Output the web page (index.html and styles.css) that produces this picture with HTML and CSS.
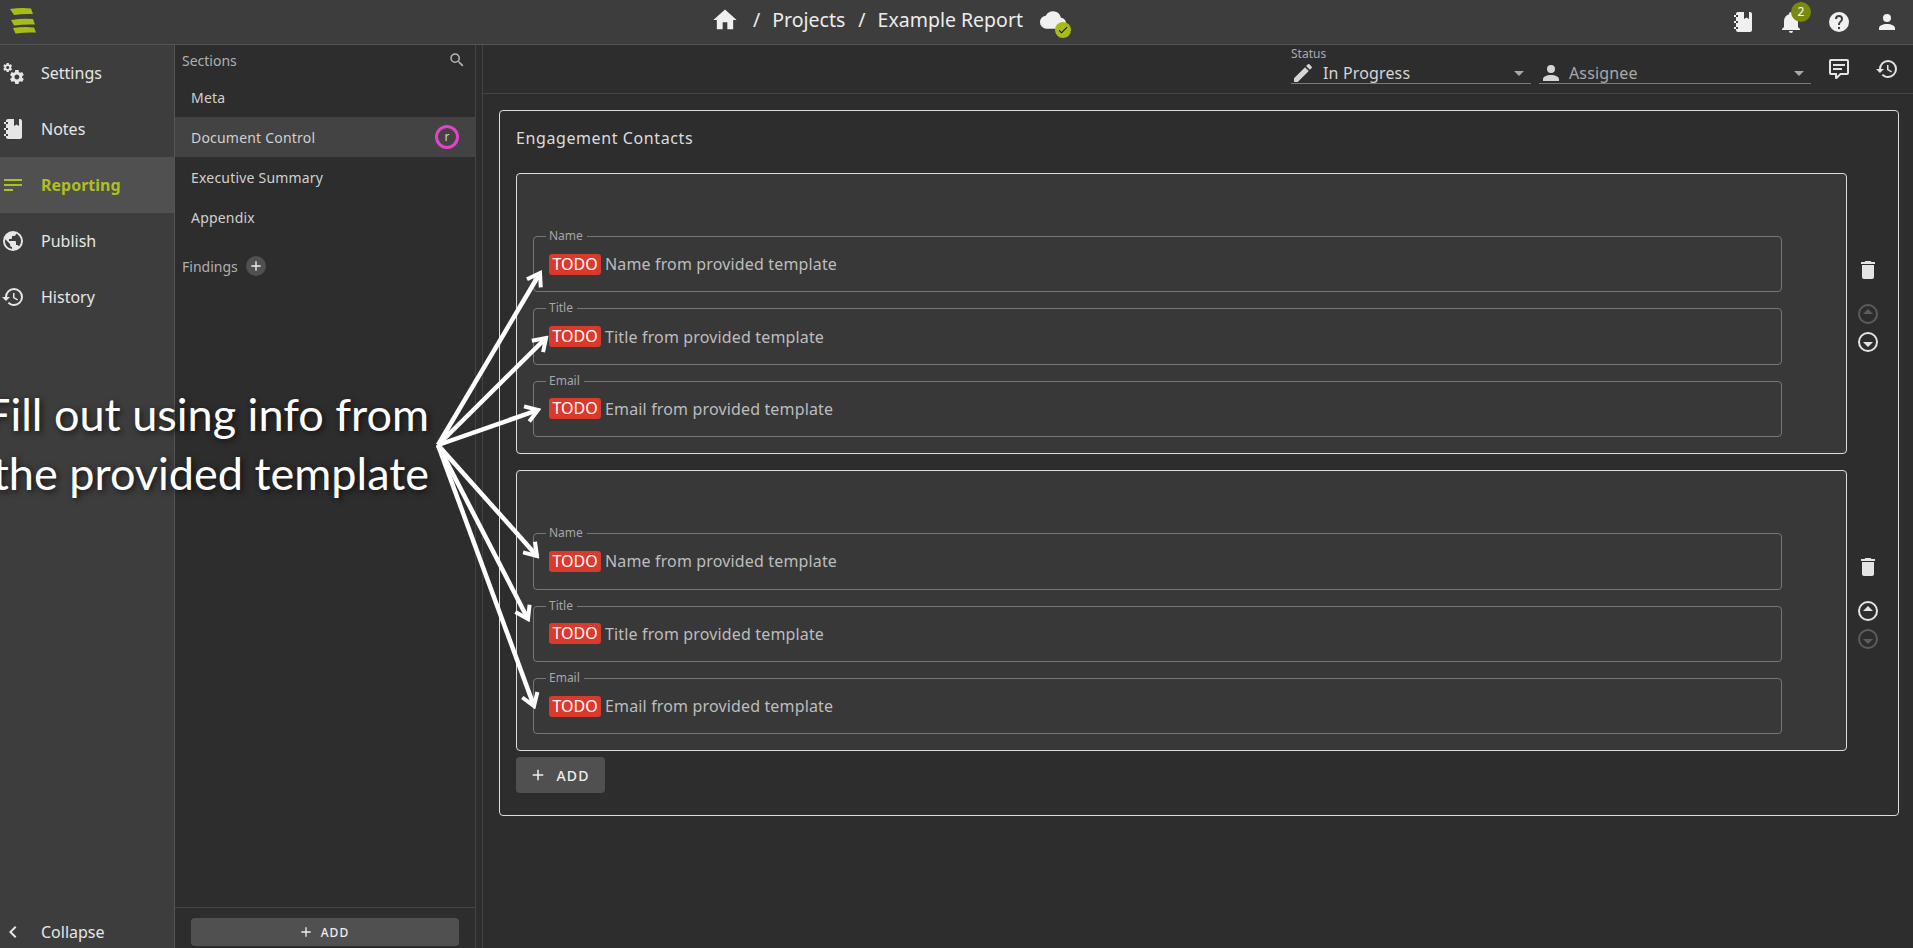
FILE: index.html
```html
<!DOCTYPE html>
<html lang="en">
<head>
<meta charset="utf-8">
<title>Example Report</title>
<link rel="stylesheet" href="styles.css">
</head>
<body>
<svg class="sprite" aria-hidden="true">
  <symbol id="i-home" viewBox="0 0 24 24"><path d="M10 20v-6h4v6h5v-8h3L12 3 2 12h3v8z"/></symbol>
  <symbol id="i-notebook" viewBox="0 0 24 24"><path d="M3 7V5H5V4C5 2.89 5.9 2 7 2H13V9L15.5 7.5L18 9V2H19C20.05 2 21 2.95 21 4V20C21 21.05 20.05 22 19 22H7C5.95 22 5 21.05 5 20V19H3V17H5V13H3V11H5V7H3M7 11H5V13H7V11M7 7V5H5V7H7M7 19V17H5V19H7Z"/></symbol>
  <symbol id="i-cogs" viewBox="0 0 24 24"><path d="M15.9,18.45C17.25,18.45 18.35,17.35 18.35,16C18.35,14.65 17.25,13.55 15.9,13.55C14.54,13.55 13.45,14.65 13.45,16C13.45,17.35 14.54,18.45 15.9,18.45M21.1,16.68L22.58,17.84C22.71,17.95 22.75,18.13 22.66,18.29L21.26,20.71C21.17,20.86 21,20.92 20.83,20.86L19.09,20.16C18.73,20.44 18.34,20.67 17.91,20.85L17.64,22.7C17.62,22.87 17.47,23 17.3,23H14.5C14.32,23 14.18,22.87 14.15,22.7L13.89,20.85C13.46,20.67 13.07,20.44 12.71,20.16L10.96,20.86C10.81,20.92 10.62,20.86 10.54,20.71L9.14,18.29C9.05,18.13 9.09,17.95 9.22,17.84L10.7,16.68L10.65,16L10.7,15.31L9.22,14.16C9.09,14.05 9.05,13.86 9.14,13.71L10.54,11.29C10.62,11.13 10.81,11.07 10.96,11.13L12.71,11.84C13.07,11.56 13.46,11.32 13.89,11.15L14.15,9.29C14.18,9.13 14.32,9 14.5,9H17.3C17.47,9 17.62,9.13 17.64,9.29L17.91,11.15C18.34,11.32 18.73,11.56 19.09,11.84L20.83,11.13C21,11.07 21.17,11.13 21.26,11.29L22.66,13.71C22.75,13.86 22.71,14.05 22.58,14.16L21.1,15.31L21.15,16L21.1,16.68M6.69,8.07C7.56,8.07 8.26,7.37 8.26,6.5C8.26,5.63 7.56,4.92 6.69,4.92A1.58,1.58 0 0,0 5.11,6.5C5.11,7.37 5.82,8.07 6.69,8.07M10.03,6.94L11,7.68C11.07,7.75 11.09,7.87 11.03,7.97L10.13,9.53C10.08,9.63 9.96,9.67 9.86,9.63L8.74,9.18L8,9.62L7.81,10.81C7.79,10.92 7.7,11 7.59,11H5.79C5.67,11 5.58,10.92 5.56,10.81L5.4,9.62L4.64,9.18L3.5,9.63C3.41,9.67 3.3,9.63 3.24,9.53L2.34,7.97C2.28,7.87 2.31,7.75 2.39,7.68L3.34,6.94L3.31,6.5L3.34,6.06L2.39,5.32C2.31,5.25 2.28,5.13 2.34,5.03L3.24,3.47C3.3,3.37 3.41,3.33 3.5,3.37L4.64,3.82L5.4,3.38L5.56,2.19C5.58,2.08 5.67,2 5.79,2H7.59C7.7,2 7.79,2.08 7.81,2.19L8,3.38L8.74,3.82L9.86,3.37C9.96,3.33 10.08,3.37 10.13,3.47L11.03,5.03C11.09,5.13 11.07,5.25 11,5.32L10.03,6.06L10.06,6.5L10.03,6.94Z"/></symbol>
  <symbol id="i-text" viewBox="0 0 24 24"><path d="M21,6V8H3V6H21M3,18H12V16H3V18M3,13H21V11H3V13Z"/></symbol>
  <symbol id="i-earth" viewBox="0 0 24 24"><path d="M17.9,17.39C17.64,16.59 16.89,16 16,16H15V13A1,1 0 0,0 14,12H8V10H10A1,1 0 0,0 11,9V7H13A2,2 0 0,0 15,5V4.59C17.93,5.77 20,8.64 20,12C20,14.08 19.2,15.97 17.9,17.39M11,19.93C7.05,19.44 4,16.08 4,12C4,11.38 4.08,10.78 4.21,10.21L9,15V16A2,2 0 0,0 11,18M12,2A10,10 0 0,0 2,12A10,10 0 0,0 12,22A10,10 0 0,0 22,12A10,10 0 0,0 12,2Z"/></symbol>
  <symbol id="i-history" viewBox="0 0 24 24"><path d="M13.5,8H12V13L16.28,15.54L17,14.33L13.5,12.25V8M13,3A9,9 0 0,0 4,12H1L4.96,16.03L9,12H6A7,7 0 0,1 13,5A7,7 0 0,1 20,12A7,7 0 0,1 13,19C11.07,19 9.32,18.21 8.06,16.94L6.64,18.36C8.27,20 10.5,21 13,21A9,9 0 0,0 22,12A9,9 0 0,0 13,3"/></symbol>
  <symbol id="i-search" viewBox="0 0 24 24"><path d="M9.5,3A6.5,6.5 0 0,1 16,9.5C16,11.11 15.41,12.59 14.44,13.73L14.71,14H15.5L20.5,19L19,20.5L14,15.5V14.71L13.73,14.44C12.59,15.41 11.11,16 9.5,16A6.5,6.5 0 0,1 3,9.5A6.5,6.5 0 0,1 9.5,3M9.5,5C7,5 5,7 5,9.5C5,12 7,14 9.5,14C12,14 14,12 14,9.5C14,7 12,5 9.5,5Z"/></symbol>
  <symbol id="i-plus" viewBox="0 0 24 24"><path d="M19,13H13V19H11V13H5V11H11V5H13V11H19V13Z"/></symbol>
  <symbol id="i-cloud" viewBox="0 0 24 24"><path d="M19.35,10.03C18.67,6.59 15.64,4 12,4C9.11,4 6.6,5.64 5.35,8.03C2.34,8.36 0,10.9 0,14A6,6 0 0,0 6,20H19A5,5 0 0,0 24,15C24,12.36 21.95,10.22 19.35,10.03Z"/></symbol>
  <symbol id="i-check" viewBox="0 0 24 24"><path d="M21,7L9,19L3.5,13.5L4.91,12.09L9,16.17L19.59,5.59L21,7Z"/></symbol>
  <symbol id="i-bell" viewBox="0 0 24 24"><path d="M21,19V20H3V19L5,17V11C5,7.9 7.03,5.17 10,4.29C10,4.19 10,4.1 10,4A2,2 0 0,1 12,2A2,2 0 0,1 14,4C14,4.1 14,4.19 14,4.29C16.97,5.17 19,7.9 19,11V17L21,19M14,21A2,2 0 0,1 12,23A2,2 0 0,1 10,21"/></symbol>
  <symbol id="i-help" viewBox="0 0 24 24"><path d="M15.07,11.25L14.17,12.17C13.45,12.89 13,13.5 13,15H11V14.5C11,13.39 11.45,12.39 12.17,11.67L13.41,10.41C13.78,10.05 14,9.55 14,9C14,7.89 13.1,7 12,7A2,2 0 0,0 10,9H8A4,4 0 0,1 12,5A4,4 0 0,1 16,9C16,9.88 15.64,10.67 15.07,11.25M13,19H11V17H13M12,2A10,10 0 0,0 2,12A10,10 0 0,0 12,22A10,10 0 0,0 22,12C22,6.47 17.5,2 12,2Z"/></symbol>
  <symbol id="i-account" viewBox="0 0 24 24"><path d="M12,4A4,4 0 0,1 16,8A4,4 0 0,1 12,12A4,4 0 0,1 8,8A4,4 0 0,1 12,4M12,14C16.42,14 20,15.79 20,18V20H4V18C4,15.79 7.58,14 12,14Z"/></symbol>
  <symbol id="i-pencil" viewBox="0 0 24 24"><path d="M20.71,7.04C21.1,6.65 21.1,6 20.71,5.63L18.37,3.29C18,2.9 17.35,2.9 16.96,3.29L15.12,5.12L18.87,8.87M3,17.25V21H6.75L17.81,9.93L14.06,6.18L3,17.25Z"/></symbol>
  <symbol id="i-down" viewBox="0 0 24 24"><path d="M7,10L12,15L17,10H7Z"/></symbol>
  <symbol id="i-comment" viewBox="0 0 24 24"><path d="M9,22A1,1 0 0,1 8,21V18H4A2,2 0 0,1 2,16V4C2,2.89 2.9,2 4,2H20A2,2 0 0,1 22,4V16A2,2 0 0,1 20,18H13.9L10.2,21.71C10,21.9 9.75,22 9.5,22V22H9M10,16V19.08L13.08,16H20V4H4V16H10M6,7H18V9H6V7M6,11H15V13H6V11Z"/></symbol>
  <symbol id="i-delete" viewBox="0 0 24 24"><path d="M19,4H15.5L14.5,3H9.5L8.5,4H5V6H19M6,19A2,2 0 0,0 8,21H16A2,2 0 0,0 18,19V7H6V19Z"/></symbol>
  <symbol id="i-up-circle" viewBox="0 0 24 24"><path d="M12,7L17,12H7M12,22A10,10 0 0,1 2,12A10,10 0 0,1 12,2A10,10 0 0,1 22,12A10,10 0 0,1 12,22M12,4A8,8 0 0,0 4,12A8,8 0 0,0 12,20A8,8 0 0,0 20,12A8,8 0 0,0 12,4Z"/></symbol>
  <symbol id="i-down-circle" viewBox="0 0 24 24"><path d="M12,17L7,12H17M12,2A10,10 0 0,1 22,12A10,10 0 0,1 12,22A10,10 0 0,1 2,12A10,10 0 0,1 12,2M12,4A8,8 0 0,0 4,12A8,8 0 0,0 12,20A8,8 0 0,0 20,12A8,8 0 0,0 12,4Z"/></symbol>
  <symbol id="i-left" viewBox="0 0 24 24"><path d="M15.41,16.58L10.83,12L15.41,7.41L14,6L8,12L14,18L15.41,16.58Z"/></symbol>
</svg>

<header class="topbar">
  <svg class="logo" viewBox="0 0 44 44" aria-hidden="true">
    <path d="M10 9Q21 7.500 31 8.500L33 14Q23 13.500 14 15Z"/>
    <path d="M11 20Q23 18 33 19L35 24.500Q25 24 14 25.500Z"/>
    <path d="M13 28Q24 26.500 34 27.500L36 32.500Q26 32 15.500 33.500Z"/>
  </svg>
  <nav class="crumbs">
    <svg class="icon crumb-home"><use href="#i-home"/></svg>
    <span class="crumb-sep">/</span>
    <span>Projects</span>
    <span class="crumb-sep">/</span>
    <span>Example Report</span>
    <span class="sync">
      <svg class="icon sync-cloud"><use href="#i-cloud"/></svg>
      <span class="sync-ok"><svg class="sync-check"><use href="#i-check"/></svg></span>
    </span>
  </nav>
  <div class="top-actions">
    <span class="top-btn"><svg class="icon"><use href="#i-notebook"/></svg></span>
    <span class="top-btn"><svg class="icon"><use href="#i-bell"/></svg><span class="bell-badge">2</span></span>
    <span class="top-btn"><svg class="icon"><use href="#i-help"/></svg></span>
    <span class="top-btn"><svg class="icon"><use href="#i-account"/></svg></span>
  </div>
</header>

<div class="shell">
  <aside class="sidebar">
    <a class="nav-item"><svg class="icon"><use href="#i-cogs"/></svg><span>Settings</span></a>
    <a class="nav-item"><svg class="icon"><use href="#i-notebook"/></svg><span>Notes</span></a>
    <a class="nav-item is-active"><svg class="icon"><use href="#i-text"/></svg><span>Reporting</span></a>
    <a class="nav-item"><svg class="icon"><use href="#i-earth"/></svg><span>Publish</span></a>
    <a class="nav-item"><svg class="icon"><use href="#i-history"/></svg><span>History</span></a>
    <a class="collapse"><svg class="icon"><use href="#i-left"/></svg><span>Collapse</span></a>
  </aside>

  <section class="sections">
    <div class="sections-scroll">
      <div class="panel-head">
        <span>Sections</span>
        <svg class="search-icon"><use href="#i-search"/></svg>
      </div>
      <div class="sec-item">Meta</div>
      <div class="sec-item is-selected">Document Control<span class="avatar">r</span></div>
      <div class="sec-item">Executive Summary</div>
      <div class="sec-item">Appendix</div>
      <div class="findings-head">
        <span>Findings</span>
        <span class="round-plus"><svg><use href="#i-plus"/></svg></span>
      </div>
    </div>
    <div class="sections-foot">
      <button class="btn btn-wide"><svg><use href="#i-plus"/></svg>Add</button>
    </div>
  </section>

  <div class="gutter"></div>

  <main class="main">
    <div class="statusbar">
      <div class="select select-status">
        <span class="select-label">Status</span>
        <svg class="icon"><use href="#i-pencil"/></svg>
        <span class="select-value">In Progress</span>
        <svg class="icon select-caret"><use href="#i-down"/></svg>
      </div>
      <div class="select select-assignee">
        <svg class="icon"><use href="#i-account"/></svg>
        <span class="select-value is-placeholder">Assignee</span>
        <svg class="icon select-caret"><use href="#i-down"/></svg>
      </div>
      <span class="bar-btn"><svg class="icon"><use href="#i-comment"/></svg></span>
      <span class="bar-btn"><svg class="icon"><use href="#i-history"/></svg></span>
    </div>

    <div class="content">
      <div class="outer-card">
        <h2 class="outer-title">Engagement Contacts</h2>

        <div class="contact-row">
          <div class="contact-card">
            <div class="field"><span class="legend">Name</span><span class="chip">TODO</span><span>Name from provided template</span></div>
            <div class="field"><span class="legend">Title</span><span class="chip">TODO</span><span>Title from provided template</span></div>
            <div class="field"><span class="legend">Email</span><span class="chip">TODO</span><span>Email from provided template</span></div>
          </div>
          <div class="row-actions">
            <span class="trash"><svg class="icon"><use href="#i-delete"/></svg></span>
            <span class="move is-disabled"><svg class="icon"><use href="#i-up-circle"/></svg></span>
            <span class="move"><svg class="icon"><use href="#i-down-circle"/></svg></span>
          </div>
        </div>

        <div class="contact-row">
          <div class="contact-card">
            <div class="field"><span class="legend">Name</span><span class="chip">TODO</span><span>Name from provided template</span></div>
            <div class="field"><span class="legend">Title</span><span class="chip">TODO</span><span>Title from provided template</span></div>
            <div class="field"><span class="legend">Email</span><span class="chip">TODO</span><span>Email from provided template</span></div>
          </div>
          <div class="row-actions">
            <span class="trash"><svg class="icon"><use href="#i-delete"/></svg></span>
            <span class="move"><svg class="icon"><use href="#i-up-circle"/></svg></span>
            <span class="move is-disabled"><svg class="icon"><use href="#i-down-circle"/></svg></span>
          </div>
        </div>

        <button class="btn btn-add"><svg><use href="#i-plus"/></svg>Add</button>
      </div>
    </div>
  </main>
</div>

<div class="callout">Fill out using info from<br>the provided template</div>
<svg class="callout-arrows" viewBox="0 0 1913 948" aria-hidden="true">
  <defs>
    <marker id="head" viewBox="0 0 20 20" refX="17" refY="10" markerWidth="20" markerHeight="20" markerUnits="userSpaceOnUse" orient="auto">
      <path d="M5 2L17 10L5 18" fill="none" stroke="#fff" stroke-width="4"/>
    </marker>
  </defs>
  <g marker-end="url(#head)">
    <line x1="438" y1="445" x2="540" y2="273"/>
    <line x1="438" y1="445" x2="546" y2="338"/>
    <line x1="438" y1="445" x2="538" y2="410"/>
    <line x1="438" y1="445" x2="537" y2="556"/>
    <line x1="438" y1="445" x2="528" y2="619"/>
    <line x1="438" y1="445" x2="534" y2="706"/>
  </g>
</svg>
</body>
</html>
```
FILE: styles.css
```css
* { box-sizing: border-box; }

html, body {
  margin: 0;
  height: 948px;
  overflow: hidden;
}

body {
  position: relative;
  background: #2d2d2d;
  color: #e0e0e0;
  font-family: "Noto Sans", sans-serif;
  font-size: 16px;
}

.sprite { display: none; }

.icon {
  width: 24px;
  height: 24px;
  flex: none;
  fill: currentColor;
}

/* top bar */
.topbar {
  display: flex;
  align-items: center;
  height: 45px;
  background: #3d3d3d;
  border-bottom: 1px solid #555;
}

.logo {
  width: 44px;
  height: 44px;
  flex: none;
  fill: #a9bb17;
}

.crumbs {
  display: flex;
  align-items: center;
  margin-left: 667px;
  padding-bottom: 5px;
  font-size: 19.5px;
  color: #ececec;
}

.crumb-home { color: #f0f0f0; width: 28px; height: 28px; margin-right: 1px; }
.crumb-sep { margin: 0 12px 0 13px; }

.sync {
  position: relative;
  display: block;
  width: 26px;
  height: 26px;
  margin-left: 17px;
  color: #f0f0f0;
}

.sync-cloud { width: 26px; height: 26px; }

.sync-ok {
  position: absolute;
  left: 15px;
  top: 15px;
  width: 16px;
  height: 16px;
  display: flex;
  align-items: center;
  justify-content: center;
  border-radius: 50%;
  background: #a9bb17;
}

.sync-check { width: 12px; height: 12px; fill: #111; }

.top-actions {
  display: flex;
  margin-left: auto;
  padding-right: 2px;
}

.top-btn {
  position: relative;
  display: flex;
  align-items: center;
  justify-content: center;
  width: 48px;
  height: 44px;
  color: #f0f0f0;
}

.bell-badge {
  position: absolute;
  left: 24px;
  top: 2px;
  width: 20px;
  height: 20px;
  border-radius: 50%;
  background: #7b8a0c;
  color: #fff;
  font-size: 12px;
  line-height: 20px;
  text-align: center;
}

/* frame */
.shell {
  display: flex;
  height: 903px;
}

.sidebar {
  display: flex;
  flex-direction: column;
  width: 175px;
  flex: none;
  background: #3d3d3d;
  border-right: 1px solid #555;
}

.nav-item {
  display: flex;
  align-items: center;
  gap: 16px;
  height: 56px;
  color: #e6e6e6;
}

.nav-item.is-active {
  background: #505050;
  color: #aebf1f;
  font-weight: 700;
}

.nav-item .icon { margin-left: 1px; }

.collapse {
  display: flex;
  align-items: center;
  gap: 16px;
  height: 32px;
  margin-top: auto;
  color: #e6e6e6;
  font-size: 16px;
}

.collapse .icon { margin-left: 1px; }

/* section list */
.sections {
  display: flex;
  flex-direction: column;
  width: 301px;
  flex: none;
  border-right: 1px solid #444;
}

.sections-scroll { flex: 1; }

.panel-head {
  display: flex;
  align-items: center;
  justify-content: space-between;
  height: 32px;
  padding: 0 9px 2px 7px;
  font-size: 14px;
  color: #b0b0b0;
}

.search-icon { width: 18px; height: 18px; fill: #b5b5b5; }

.sec-item {
  display: flex;
  align-items: center;
  justify-content: space-between;
  height: 40px;
  padding: 0 16px;
  font-size: 14px;
  letter-spacing: .2px;
  color: #d0d0d0;
}

.sec-item.is-selected { background: #434343; }

.avatar {
  width: 24px;
  height: 24px;
  border: 3px solid #e044c8;
  border-radius: 50%;
  font-size: 12px;
  line-height: 17px;
  text-align: center;
}

.findings-head {
  display: flex;
  align-items: center;
  gap: 8px;
  height: 40px;
  margin-top: 9px;
  padding-left: 7px;
  font-size: 14px;
  color: #b0b0b0;
}

.round-plus {
  display: flex;
  align-items: center;
  justify-content: center;
  width: 20px;
  height: 20px;
  border-radius: 50%;
  background: #505050;
}

.round-plus svg { width: 16px; height: 16px; fill: #f0f0f0; }

.sections-foot {
  height: 41px;
  padding-top: 10px;
  padding-left: 16px;
  border-top: 1px solid #444;
}

.btn {
  display: flex;
  align-items: center;
  justify-content: center;
  border: 0;
  border-radius: 4px;
  background: #505050;
  color: #eee;
  font-family: inherit;
  font-weight: 500;
  text-transform: uppercase;
}

.btn-wide {
  width: 268px;
  height: 28px;
  gap: 7px;
  padding-right: 9px;
  font-size: 12px;
  letter-spacing: 1.1px;
}

.btn-wide svg { width: 16px; height: 16px; fill: #eee; }

.btn-add {
  width: 89px;
  height: 36px;
  gap: 9px;
  padding-right: 8px;
  margin-top: 6px;
  font-size: 14px;
  letter-spacing: 1.2px;
}

.btn-add svg { width: 18px; height: 18px; fill: #eee; }

.gutter { width: 6px; flex: none; }

/* main */
.main {
  flex: 1;
  min-width: 0;
  border-left: 1px solid #444;
}

.statusbar {
  display: flex;
  align-items: flex-end;
  justify-content: flex-end;
  gap: 0;
  height: 49px;
  padding-right: 2px;
  border-bottom: 1px solid #444;
}

.select {
  position: relative;
  display: flex;
  align-items: center;
  height: 24px;
  margin-bottom: 9px;
  padding-top: 2px;
  border-bottom: 1px solid #7a7a7a;
  color: #d5d5d5;
}

.select-status { width: 240px; margin-right: 8px; }
.select-assignee { width: 272px; margin-right: 4px; }

.select-label {
  position: absolute;
  left: 0;
  top: -14px;
  font-size: 12px;
  line-height: 16px;
  color: #aaa;
}

.select-value { margin-left: 8px; font-size: 16px; letter-spacing: .15px; }
.select-value.is-placeholder { margin-left: 6px; color: #a8a8a8; }
.select-caret { margin-left: auto; color: #a8a8a8; }

.bar-btn {
  display: flex;
  align-items: center;
  justify-content: center;
  width: 48px;
  height: 48px;
  color: #e4e4e4;
}

.content { padding: 16px 14px 0 16px; }

.outer-card {
  height: 706px;
  padding: 15px 9px 0 16px;
  border: 1px solid #dcdcdc;
  border-radius: 4px;
}

.outer-title {
  height: 24px;
  margin: 0 0 23px;
  font-size: 16px;
  font-weight: 400;
  line-height: 24px;
  letter-spacing: .6px;
  color: #dcdcdc;
}

.contact-row {
  display: flex;
  margin-bottom: 16px;
}

.contact-row:last-of-type { margin-bottom: 0; }

.contact-card {
  width: 1331px;
  padding: 62px 64px 16px 16px;
  background: #383838;
  border: 1px solid #dcdcdc;
  border-radius: 4px;
}

.field {
  position: relative;
  display: flex;
  align-items: center;
  height: 56.4px;
  padding-left: 15px;
  border: 1px solid #767676;
  border-radius: 4px;
  color: #bdbdbd;
  font-size: 16px;
  letter-spacing: .15px;
}

.field + .field { margin-top: 16px; }

.legend {
  position: absolute;
  left: 12px;
  top: -8px;
  padding: 0 4px 0 3px;
  background: #383838;
  font-size: 12px;
  line-height: 14px;
  letter-spacing: 0;
  color: #a6a6a6;
}

.chip {
  width: 52px;
  height: 21px;
  margin-right: 4px;
  border-radius: 3px;
  background: #d93a2c;
  color: #fff;
  letter-spacing: 0;
  line-height: 21px;
  text-align: center;
}

.row-actions {
  display: flex;
  flex-direction: column;
  align-items: center;
  width: 42px;
  padding-top: 77px;
  color: #e4e4e4;
}

.trash {
  display: flex;
  align-items: center;
  height: 40px;
  margin-bottom: 10px;
}

.move {
  display: flex;
  align-items: center;
  height: 28px;
}

.move.is-disabled { color: #5c5c5c; }

/* annotation laid over the screenshot */
.callout {
  position: absolute;
  left: -60px;
  top: 385px;
  width: 489px;
  font-family: Lato, sans-serif;
  font-size: 45px;
  line-height: 59px;
  text-align: right;
  white-space: nowrap;
  color: #fff;
  text-shadow: 2px 2px 6px rgba(0, 0, 0, .7);
}

.callout-arrows {
  position: absolute;
  left: 0;
  top: 0;
  width: 1913px;
  height: 948px;
  pointer-events: none;
  stroke: #fff;
  stroke-width: 4.5;
}
```
